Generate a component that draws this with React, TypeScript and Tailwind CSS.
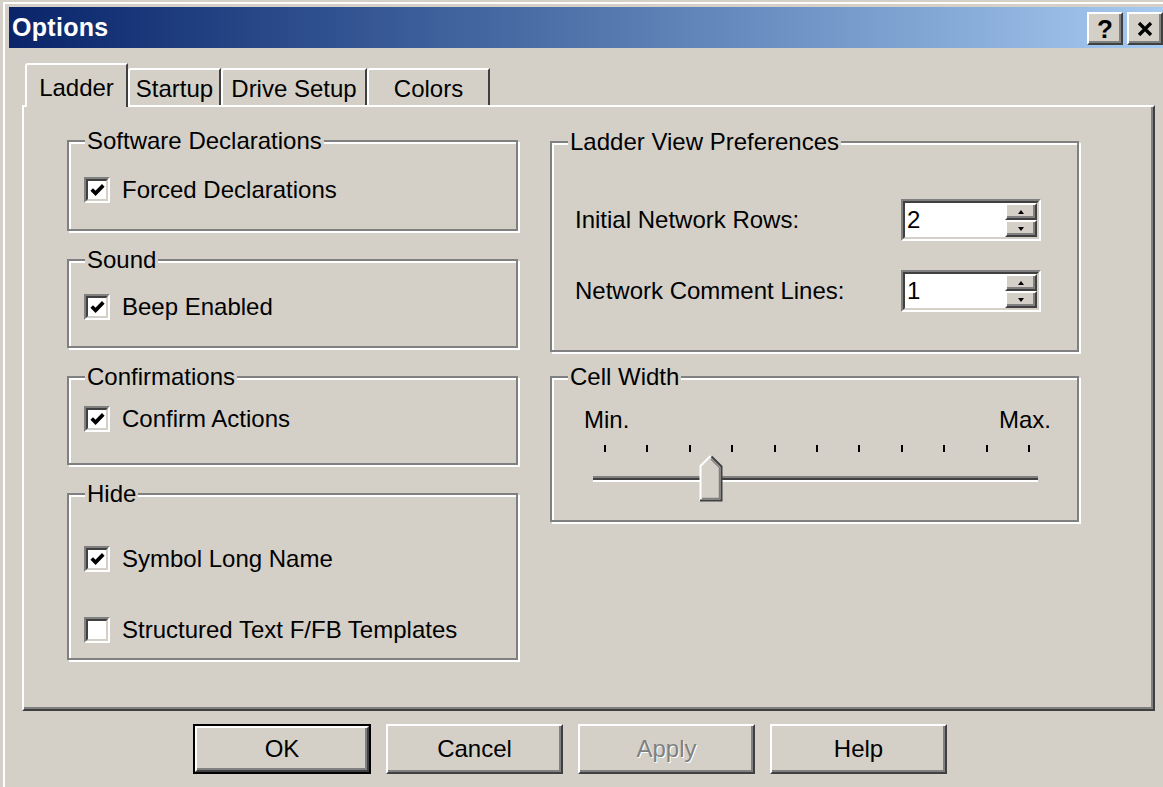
import type { ReactNode } from 'react'

const raised =
  'border-2 border-t-white border-l-white border-r-[#404040] border-b-[#404040] shadow-[inset_-2px_-2px_0_#808080]'

function Check() {
  return (
    <svg width="15" height="14" viewBox="0 0 7 6.5">
      <path d="M0.8 3.0 L2.6 4.8 L6.2 1.1" fill="none" stroke="#000" strokeWidth="1.7" />
    </svg>
  )
}

function CheckRow({ label, checked, className }: { label: string; checked: boolean; className: string }) {
  return (
    <div className={`flex items-center pl-[15px] ${className}`}>
      <div className="h-[26px] w-[26px] border-2 border-t-[#808080] border-l-[#808080] border-r-white border-b-white">
        <div className="flex h-full w-full items-center justify-center border-2 border-t-[#404040] border-l-[#404040] border-r-[#d4d0c8] border-b-[#d4d0c8] bg-white">
          {checked && <Check />}
        </div>
      </div>
      <span className="ml-[12px] text-[24px] leading-[26px]">{label}</span>
    </div>
  )
}

function Group({ title, className, children }: { title: string; className: string; children?: ReactNode }) {
  return (
    <fieldset
      className={`border-2 border-[#808080] shadow-[inset_2px_2px_0_#fff,2px_2px_0_#fff] ${className}`}
    >
      <legend className="ml-[16px] bg-[#d4d0c8] px-[2px] text-[24px] leading-[22px]">{title}</legend>
      {children}
    </fieldset>
  )
}

function Spinner({ value }: { value: string }) {
  return (
    <div className="h-[42px] w-[140px] border-2 border-t-[#808080] border-l-[#808080] border-r-white border-b-white">
      <div className="flex h-full border-2 border-t-[#404040] border-l-[#404040] border-r-[#d4d0c8] border-b-[#d4d0c8] bg-white">
        <div className="flex-1 pl-[2px] text-[24px] leading-[34px]">{value}</div>
        <div className="flex w-[32px] flex-col">
          <div className={`flex flex-1 items-center justify-center bg-[#d4d0c8] ${raised}`}>
            <svg width="6" height="4" viewBox="0 0 6 4">
              <path d="M3 0 L6 4 L0 4 Z" fill="#000" />
            </svg>
          </div>
          <div className={`flex flex-1 items-center justify-center bg-[#d4d0c8] ${raised}`}>
            <svg width="6" height="4" viewBox="0 0 6 4">
              <path d="M0 0 L6 0 L3 4 Z" fill="#000" />
            </svg>
          </div>
        </div>
      </div>
    </div>
  )
}

function Thumb() {
  return (
    <svg width="24" height="47" viewBox="0 0 24 47" className="block">
      <path d="M1 11 L11 1 L13 1 L23 11 L23 46 L1 46 Z" fill="#d4d0c8" />
      <path d="M1.5 46 L1.5 11 L11.5 1" fill="none" stroke="#fff" strokeWidth="2" />
      <path d="M12.5 1.5 L22.5 11.5 L22.5 45.5 L1 45.5" fill="none" stroke="#404040" strokeWidth="2" />
      <path d="M12 4 L20.5 12.5 L20.5 43.5 L3 43.5" fill="none" stroke="#808080" strokeWidth="1.5" />
    </svg>
  )
}

function Tab({ label, className, active }: { label: string; className: string; active?: boolean }) {
  if (active) {
    return (
      <div
        className={`relative z-10 -mb-[2px] flex h-[44px] items-start justify-center rounded-tl-[3px] border-t-2 border-l-2 border-r-2 border-t-white border-l-white border-r-[#404040] bg-[#d4d0c8] pt-[10px] text-[24px] leading-[26px] ${className}`}
      >
        {label}
      </div>
    )
  }
  return (
    <div
      className={`flex h-[37px] items-start justify-center rounded-tl-[3px] border-t-2 border-l-2 border-r-2 border-t-white border-l-white border-r-[#404040] pt-[6px] text-[24px] leading-[26px] ${className}`}
    >
      {label}
    </div>
  )
}

function PushButton({ label, isDefault, disabled }: { label: string; isDefault?: boolean; disabled?: boolean }) {
  const face = (
    <div
      className={`flex h-full w-full items-center justify-center bg-[#d4d0c8] text-[24px] ${raised} ${
        disabled ? 'text-[#808080] [text-shadow:1px_1px_0_#fff]' : ''
      }`}
    >
      {label}
    </div>
  )
  if (isDefault) {
    return <div className="h-[50px] w-[178px] border-2 border-black">{face}</div>
  }
  return <div className="h-[50px] w-[177px]">{face}</div>
}

export default function App() {
  return (
    <div className="h-[787px] w-[1163px] overflow-hidden bg-[#d4d0c8] font-['Liberation_Sans',Arial,sans-serif] text-black">
      <div className="ml-[3px] mt-[2px] h-full border-l-2 border-t-2 border-white pl-[4px] pt-[3px]">
        {/* caption bar */}
        <div className="flex h-[41px] items-center justify-between bg-linear-to-r from-[#0a246a] to-[#a6caf0]">
          <span className="pl-[3px] text-[25px] font-bold tracking-[0.3px] text-white">Options</span>
          <div className="flex gap-[4px] pt-[2px]">
            <div className={`flex h-[33px] w-[36px] items-center justify-center bg-[#d4d0c8] text-[26px] font-bold leading-none ${raised}`}>
              ?
            </div>
            <div className={`flex h-[33px] w-[36px] items-center justify-center bg-[#d4d0c8] ${raised}`}>
              <svg width="16" height="14" viewBox="0 0 16 14">
                <path d="M2 1 L14 13 M14 1 L2 13" stroke="#000" strokeWidth="3.4" />
              </svg>
            </div>
          </div>
        </div>

        {/* tab strip */}
        <div className="ml-[16px] mt-[15px] flex h-[42px] items-end">
          <Tab label="Ladder" className="w-[103px]" active />
          <Tab label="Startup" className="w-[93px]" />
          <Tab label="Drive Setup" className="w-[146px]" />
          <Tab label="Colors" className="w-[123px]" />
        </div>

        {/* tab page */}
        <div className="ml-[13px] flex h-[606px] w-[1133px] gap-[32px] border-2 border-t-white border-l-white border-r-[#404040] border-b-[#404040] pl-[43px] pt-[23px] shadow-[inset_-2px_-2px_0_#808080]">
          <div className="flex w-[451px] flex-col gap-[18px]">
            <Group title="Software Declarations" className="h-[101px]">
              <CheckRow label="Forced Declarations" checked className="mt-[25px]" />
            </Group>
            <Group title="Sound" className="h-[99px]">
              <CheckRow label="Beep Enabled" checked className="mt-[23px]" />
            </Group>
            <Group title="Confirmations" className="h-[99px]">
              <CheckRow label="Confirm Actions" checked className="mt-[18px]" />
            </Group>
            <Group title="Hide" className="h-[177px]">
              <CheckRow label="Symbol Long Name" checked className="mt-[41px]" />
              <CheckRow label="Structured Text F/FB Templates" checked={false} className="mt-[45px]" />
            </Group>
          </div>

          <div className="flex w-[529px] flex-col gap-[14px] pt-[1px]">
            <Group title="Ladder View Preferences" className="h-[221px]">
              <div className="mt-[46px] flex items-center justify-between pl-[23px] pr-[36px]">
                <span className="text-[24px]">Initial Network Rows:</span>
                <Spinner value="2" />
              </div>
              <div className="mt-[29px] flex items-center justify-between pl-[23px] pr-[36px]">
                <span className="text-[24px]">Network Comment Lines:</span>
                <Spinner value="1" />
              </div>
            </Group>
            <Group title="Cell Width" className="h-[156px]">
              <div className="mt-[20px] flex justify-between pl-[32px] pr-[26px] text-[24px] leading-[24px]">
                <span>Min.</span>
                <span>Max.</span>
              </div>
              <div className="ml-[52px] mt-[13px] flex h-[7px] w-[426px] justify-between">
                {Array.from({ length: 11 }).map((_, i) => (
                  <div key={i} className="h-full w-[2px] bg-black" />
                ))}
              </div>
              <div className="relative ml-[41px] mt-[3px] h-[47px] w-[445px] pt-[21px]">
                <div className="h-[6px] border-t-2 border-b-2 border-t-[#808080] border-b-white bg-[#404040]" />
                <div className="absolute left-[106px] top-0">
                  <Thumb />
                </div>
              </div>
            </Group>
          </div>
        </div>

        {/* dialog buttons */}
        <div className="ml-[184px] mt-[13px] flex gap-[15px]">
          <PushButton label="OK" isDefault />
          <PushButton label="Cancel" />
          <PushButton label="Apply" disabled />
          <PushButton label="Help" />
        </div>
      </div>
    </div>
  )
}
